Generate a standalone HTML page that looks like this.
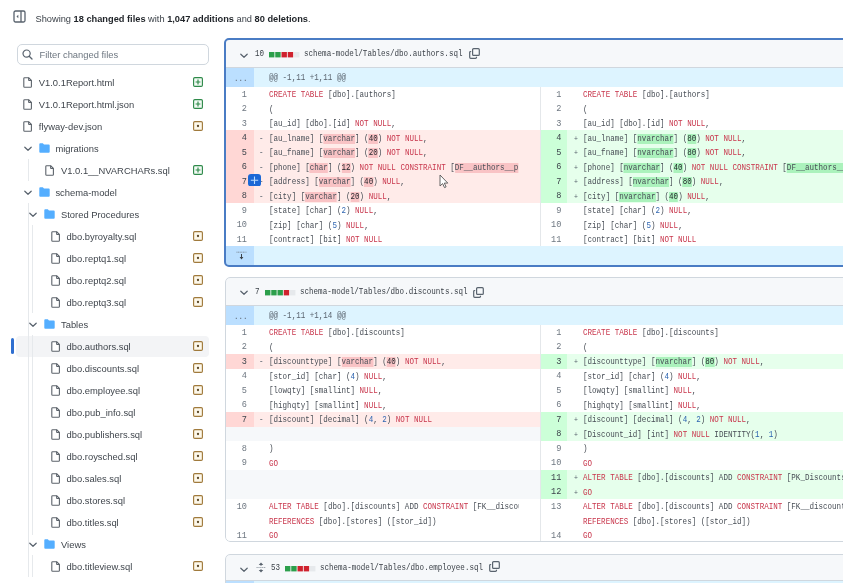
<!DOCTYPE html><html><head><meta charset="utf-8"><style>
*{box-sizing:border-box;margin:0;padding:0}
html,body{width:843px;height:583px;overflow:hidden;background:#fff}
body{position:relative;font-family:"Liberation Sans", sans-serif;color:#1f2328;filter:blur(0.35px)}
.abs{position:absolute}
.t{position:absolute;white-space:nowrap;font-size:9.4px;line-height:12px;color:#1f2328}
.num{position:absolute;font-family:"Liberation Mono", monospace;font-size:8.6px;line-height:14.5px;height:14.5px;color:#59636e;text-align:right;white-space:nowrap}
.code{position:absolute;white-space:nowrap;font-family:"Liberation Mono", monospace;font-size:8.6px;line-height:14.5px;height:14.5px;color:#474d55;transform-origin:0 50%;transform:scaleX(0.878)}
.k{color:#c8354b}
.n{color:#2d64b0}
.hd{background:#f9c3c5} .hd .n,.ha .n{color:#1f2328}
.ha{background:#abf2bc}
.bx{position:absolute;left:225px;width:680px;overflow:hidden;background:#fff;border-radius:5px}
</style></head><body><svg class="abs" style="left:13px;top:10px" width="13" height="13" viewBox="0 0 13 13">
<rect x="1" y="1" width="11" height="11" rx="1.5" fill="none" stroke="#59636e" stroke-width="1.3"/>
<line x1="8" y1="1" x2="8" y2="12" stroke="#59636e" stroke-width="1.3"/>
<path d="M5.3 4.7 L3.5 6.5 L5.3 8.3 Z" fill="#59636e"/></svg>
<div class="t" style="left:35.5px;top:12.8px;font-size:9.25px;color:#3b4148">Showing <b style="color:#1f2328">18 changed files</b> with <b style="color:#1f2328">1,047 additions</b> and <b style="color:#1f2328">80 deletions</b>.</div>
<div class="abs" style="left:17px;top:44px;width:192px;height:21px;border:1px solid #d0d7de;border-radius:5px;background:#fff"></div>
<svg class="abs" style="left:22px;top:49px" width="11" height="11" viewBox="0 0 11 11">
<circle cx="4.6" cy="4.6" r="3.6" fill="none" stroke="#59636e" stroke-width="1.2"/>
<line x1="7.2" y1="7.2" x2="10" y2="10" stroke="#59636e" stroke-width="1.3" stroke-linecap="round"/></svg>
<div class="t" style="left:39.5px;top:49px;color:#6e7781">Filter changed files</div>
<div class="abs" style="left:16px;top:335.5px;width:193px;height:21px;background:#f3f4f6;border-radius:4px"></div>
<div class="abs" style="left:11px;top:338px;width:2.6px;height:16px;background:#2f6fd0;border-radius:2px"></div>
<div class="abs" style="left:27.5px;top:159px;width:1px;height:22px;background:#e6e9ec"></div>
<div class="abs" style="left:27.5px;top:203px;width:1px;height:374px;background:#e6e9ec"></div>
<div class="abs" style="left:32.3px;top:225px;width:1px;height:88px;background:#e6e9ec"></div>
<div class="abs" style="left:32.3px;top:335px;width:1px;height:200px;background:#e6e9ec"></div>
<div class="abs" style="left:32.3px;top:555px;width:1px;height:22px;background:#e6e9ec"></div>
<svg class="abs" style="left:23.2px;top:77.0px" width="10" height="11" viewBox="0 0 10 11"><path d="M0.8 1.5 Q0.8 0.7 1.6 0.7 H5.6 L8.4 3.5 V9.5 Q8.4 10.3 7.6 10.3 H1.6 Q0.8 10.3 0.8 9.5 Z" fill="#fff" stroke="#5c636b" stroke-width="1.1" stroke-linejoin="round"/><path d="M5.6 0.7 V3.5 H8.4" fill="none" stroke="#5c636b" stroke-width="1"/></svg>
<div class="t" style="left:38.8px;top:76.9px;color:#40464d">V1.0.1Report.html</div>
<svg class="abs" style="left:193px;top:76.7px" width="10" height="10" viewBox="0 0 10 10"><rect x="0.6" y="0.6" width="8.8" height="8.8" rx="1.2" fill="#f2faf4" stroke="#2f8a4a" stroke-width="1.15"/><path d="M5 2.6 V7.4 M2.6 5 H7.4" stroke="#2f8a4a" stroke-width="1.15"/></svg>
<svg class="abs" style="left:23.2px;top:99.0px" width="10" height="11" viewBox="0 0 10 11"><path d="M0.8 1.5 Q0.8 0.7 1.6 0.7 H5.6 L8.4 3.5 V9.5 Q8.4 10.3 7.6 10.3 H1.6 Q0.8 10.3 0.8 9.5 Z" fill="#fff" stroke="#5c636b" stroke-width="1.1" stroke-linejoin="round"/><path d="M5.6 0.7 V3.5 H8.4" fill="none" stroke="#5c636b" stroke-width="1"/></svg>
<div class="t" style="left:38.8px;top:98.9px;color:#40464d">V1.0.1Report.html.json</div>
<svg class="abs" style="left:193px;top:98.7px" width="10" height="10" viewBox="0 0 10 10"><rect x="0.6" y="0.6" width="8.8" height="8.8" rx="1.2" fill="#f2faf4" stroke="#2f8a4a" stroke-width="1.15"/><path d="M5 2.6 V7.4 M2.6 5 H7.4" stroke="#2f8a4a" stroke-width="1.15"/></svg>
<svg class="abs" style="left:23.2px;top:121.0px" width="10" height="11" viewBox="0 0 10 11"><path d="M0.8 1.5 Q0.8 0.7 1.6 0.7 H5.6 L8.4 3.5 V9.5 Q8.4 10.3 7.6 10.3 H1.6 Q0.8 10.3 0.8 9.5 Z" fill="#fff" stroke="#5c636b" stroke-width="1.1" stroke-linejoin="round"/><path d="M5.6 0.7 V3.5 H8.4" fill="none" stroke="#5c636b" stroke-width="1"/></svg>
<div class="t" style="left:38.8px;top:120.9px;color:#40464d">flyway-dev.json</div>
<svg class="abs" style="left:193px;top:120.7px" width="10" height="10" viewBox="0 0 10 10"><rect x="0.6" y="0.6" width="8.8" height="8.8" rx="1.2" fill="#fdf8ea" stroke="#a07a3c" stroke-width="1.15"/><circle cx="5" cy="5" r="1.15" fill="#5e4a2a"/></svg>
<svg class="abs" style="left:23.6px;top:145.7px" width="8" height="6" viewBox="0 0 8 6"><path d="M0.8 1.2 L4 4.3 L7.2 1.2" fill="none" stroke="#59636e" stroke-width="1.2" stroke-linecap="round" stroke-linejoin="round"/></svg>
<svg class="abs" style="left:38.6px;top:143.0px" width="11" height="10" viewBox="0 0 11 10"><path d="M0.3 1.2 Q0.3 0.3 1.2 0.3 H3.8 L5 1.6 H9.8 Q10.7 1.6 10.7 2.5 V8.8 Q10.7 9.7 9.8 9.7 H1.2 Q0.3 9.7 0.3 8.8 Z" fill="#54aeff"/></svg>
<div class="t" style="left:55.4px;top:142.9px;color:#40464d">migrations</div>
<svg class="abs" style="left:45.4px;top:165.0px" width="10" height="11" viewBox="0 0 10 11"><path d="M0.8 1.5 Q0.8 0.7 1.6 0.7 H5.6 L8.4 3.5 V9.5 Q8.4 10.3 7.6 10.3 H1.6 Q0.8 10.3 0.8 9.5 Z" fill="#fff" stroke="#5c636b" stroke-width="1.1" stroke-linejoin="round"/><path d="M5.6 0.7 V3.5 H8.4" fill="none" stroke="#5c636b" stroke-width="1"/></svg>
<div class="t" style="left:61.0px;top:164.9px;color:#40464d">V1.0.1__NVARCHARs.sql</div>
<svg class="abs" style="left:193px;top:164.7px" width="10" height="10" viewBox="0 0 10 10"><rect x="0.6" y="0.6" width="8.8" height="8.8" rx="1.2" fill="#f2faf4" stroke="#2f8a4a" stroke-width="1.15"/><path d="M5 2.6 V7.4 M2.6 5 H7.4" stroke="#2f8a4a" stroke-width="1.15"/></svg>
<svg class="abs" style="left:23.6px;top:189.7px" width="8" height="6" viewBox="0 0 8 6"><path d="M0.8 1.2 L4 4.3 L7.2 1.2" fill="none" stroke="#59636e" stroke-width="1.2" stroke-linecap="round" stroke-linejoin="round"/></svg>
<svg class="abs" style="left:38.6px;top:187.0px" width="11" height="10" viewBox="0 0 11 10"><path d="M0.3 1.2 Q0.3 0.3 1.2 0.3 H3.8 L5 1.6 H9.8 Q10.7 1.6 10.7 2.5 V8.8 Q10.7 9.7 9.8 9.7 H1.2 Q0.3 9.7 0.3 8.8 Z" fill="#54aeff"/></svg>
<div class="t" style="left:55.4px;top:186.9px;color:#40464d">schema-model</div>
<svg class="abs" style="left:29.200000000000003px;top:211.7px" width="8" height="6" viewBox="0 0 8 6"><path d="M0.8 1.2 L4 4.3 L7.2 1.2" fill="none" stroke="#59636e" stroke-width="1.2" stroke-linecap="round" stroke-linejoin="round"/></svg>
<svg class="abs" style="left:44.2px;top:209.0px" width="11" height="10" viewBox="0 0 11 10"><path d="M0.3 1.2 Q0.3 0.3 1.2 0.3 H3.8 L5 1.6 H9.8 Q10.7 1.6 10.7 2.5 V8.8 Q10.7 9.7 9.8 9.7 H1.2 Q0.3 9.7 0.3 8.8 Z" fill="#54aeff"/></svg>
<div class="t" style="left:61.0px;top:208.9px;color:#40464d">Stored Procedures</div>
<svg class="abs" style="left:51.0px;top:231.0px" width="10" height="11" viewBox="0 0 10 11"><path d="M0.8 1.5 Q0.8 0.7 1.6 0.7 H5.6 L8.4 3.5 V9.5 Q8.4 10.3 7.6 10.3 H1.6 Q0.8 10.3 0.8 9.5 Z" fill="#fff" stroke="#5c636b" stroke-width="1.1" stroke-linejoin="round"/><path d="M5.6 0.7 V3.5 H8.4" fill="none" stroke="#5c636b" stroke-width="1"/></svg>
<div class="t" style="left:66.6px;top:230.9px;color:#40464d">dbo.byroyalty.sql</div>
<svg class="abs" style="left:193px;top:230.7px" width="10" height="10" viewBox="0 0 10 10"><rect x="0.6" y="0.6" width="8.8" height="8.8" rx="1.2" fill="#fdf8ea" stroke="#a07a3c" stroke-width="1.15"/><circle cx="5" cy="5" r="1.15" fill="#5e4a2a"/></svg>
<svg class="abs" style="left:51.0px;top:253.0px" width="10" height="11" viewBox="0 0 10 11"><path d="M0.8 1.5 Q0.8 0.7 1.6 0.7 H5.6 L8.4 3.5 V9.5 Q8.4 10.3 7.6 10.3 H1.6 Q0.8 10.3 0.8 9.5 Z" fill="#fff" stroke="#5c636b" stroke-width="1.1" stroke-linejoin="round"/><path d="M5.6 0.7 V3.5 H8.4" fill="none" stroke="#5c636b" stroke-width="1"/></svg>
<div class="t" style="left:66.6px;top:252.9px;color:#40464d">dbo.reptq1.sql</div>
<svg class="abs" style="left:193px;top:252.7px" width="10" height="10" viewBox="0 0 10 10"><rect x="0.6" y="0.6" width="8.8" height="8.8" rx="1.2" fill="#fdf8ea" stroke="#a07a3c" stroke-width="1.15"/><circle cx="5" cy="5" r="1.15" fill="#5e4a2a"/></svg>
<svg class="abs" style="left:51.0px;top:275.0px" width="10" height="11" viewBox="0 0 10 11"><path d="M0.8 1.5 Q0.8 0.7 1.6 0.7 H5.6 L8.4 3.5 V9.5 Q8.4 10.3 7.6 10.3 H1.6 Q0.8 10.3 0.8 9.5 Z" fill="#fff" stroke="#5c636b" stroke-width="1.1" stroke-linejoin="round"/><path d="M5.6 0.7 V3.5 H8.4" fill="none" stroke="#5c636b" stroke-width="1"/></svg>
<div class="t" style="left:66.6px;top:274.9px;color:#40464d">dbo.reptq2.sql</div>
<svg class="abs" style="left:193px;top:274.7px" width="10" height="10" viewBox="0 0 10 10"><rect x="0.6" y="0.6" width="8.8" height="8.8" rx="1.2" fill="#fdf8ea" stroke="#a07a3c" stroke-width="1.15"/><circle cx="5" cy="5" r="1.15" fill="#5e4a2a"/></svg>
<svg class="abs" style="left:51.0px;top:297.0px" width="10" height="11" viewBox="0 0 10 11"><path d="M0.8 1.5 Q0.8 0.7 1.6 0.7 H5.6 L8.4 3.5 V9.5 Q8.4 10.3 7.6 10.3 H1.6 Q0.8 10.3 0.8 9.5 Z" fill="#fff" stroke="#5c636b" stroke-width="1.1" stroke-linejoin="round"/><path d="M5.6 0.7 V3.5 H8.4" fill="none" stroke="#5c636b" stroke-width="1"/></svg>
<div class="t" style="left:66.6px;top:296.9px;color:#40464d">dbo.reptq3.sql</div>
<svg class="abs" style="left:193px;top:296.7px" width="10" height="10" viewBox="0 0 10 10"><rect x="0.6" y="0.6" width="8.8" height="8.8" rx="1.2" fill="#fdf8ea" stroke="#a07a3c" stroke-width="1.15"/><circle cx="5" cy="5" r="1.15" fill="#5e4a2a"/></svg>
<svg class="abs" style="left:29.200000000000003px;top:321.7px" width="8" height="6" viewBox="0 0 8 6"><path d="M0.8 1.2 L4 4.3 L7.2 1.2" fill="none" stroke="#59636e" stroke-width="1.2" stroke-linecap="round" stroke-linejoin="round"/></svg>
<svg class="abs" style="left:44.2px;top:319.0px" width="11" height="10" viewBox="0 0 11 10"><path d="M0.3 1.2 Q0.3 0.3 1.2 0.3 H3.8 L5 1.6 H9.8 Q10.7 1.6 10.7 2.5 V8.8 Q10.7 9.7 9.8 9.7 H1.2 Q0.3 9.7 0.3 8.8 Z" fill="#54aeff"/></svg>
<div class="t" style="left:61.0px;top:318.9px;color:#40464d">Tables</div>
<svg class="abs" style="left:51.0px;top:341.0px" width="10" height="11" viewBox="0 0 10 11"><path d="M0.8 1.5 Q0.8 0.7 1.6 0.7 H5.6 L8.4 3.5 V9.5 Q8.4 10.3 7.6 10.3 H1.6 Q0.8 10.3 0.8 9.5 Z" fill="#fff" stroke="#5c636b" stroke-width="1.1" stroke-linejoin="round"/><path d="M5.6 0.7 V3.5 H8.4" fill="none" stroke="#5c636b" stroke-width="1"/></svg>
<div class="t" style="left:66.6px;top:340.9px;color:#40464d">dbo.authors.sql</div>
<svg class="abs" style="left:193px;top:340.7px" width="10" height="10" viewBox="0 0 10 10"><rect x="0.6" y="0.6" width="8.8" height="8.8" rx="1.2" fill="#fdf8ea" stroke="#a07a3c" stroke-width="1.15"/><circle cx="5" cy="5" r="1.15" fill="#5e4a2a"/></svg>
<svg class="abs" style="left:51.0px;top:363.0px" width="10" height="11" viewBox="0 0 10 11"><path d="M0.8 1.5 Q0.8 0.7 1.6 0.7 H5.6 L8.4 3.5 V9.5 Q8.4 10.3 7.6 10.3 H1.6 Q0.8 10.3 0.8 9.5 Z" fill="#fff" stroke="#5c636b" stroke-width="1.1" stroke-linejoin="round"/><path d="M5.6 0.7 V3.5 H8.4" fill="none" stroke="#5c636b" stroke-width="1"/></svg>
<div class="t" style="left:66.6px;top:362.9px;color:#40464d">dbo.discounts.sql</div>
<svg class="abs" style="left:193px;top:362.7px" width="10" height="10" viewBox="0 0 10 10"><rect x="0.6" y="0.6" width="8.8" height="8.8" rx="1.2" fill="#fdf8ea" stroke="#a07a3c" stroke-width="1.15"/><circle cx="5" cy="5" r="1.15" fill="#5e4a2a"/></svg>
<svg class="abs" style="left:51.0px;top:385.0px" width="10" height="11" viewBox="0 0 10 11"><path d="M0.8 1.5 Q0.8 0.7 1.6 0.7 H5.6 L8.4 3.5 V9.5 Q8.4 10.3 7.6 10.3 H1.6 Q0.8 10.3 0.8 9.5 Z" fill="#fff" stroke="#5c636b" stroke-width="1.1" stroke-linejoin="round"/><path d="M5.6 0.7 V3.5 H8.4" fill="none" stroke="#5c636b" stroke-width="1"/></svg>
<div class="t" style="left:66.6px;top:384.9px;color:#40464d">dbo.employee.sql</div>
<svg class="abs" style="left:193px;top:384.7px" width="10" height="10" viewBox="0 0 10 10"><rect x="0.6" y="0.6" width="8.8" height="8.8" rx="1.2" fill="#fdf8ea" stroke="#a07a3c" stroke-width="1.15"/><circle cx="5" cy="5" r="1.15" fill="#5e4a2a"/></svg>
<svg class="abs" style="left:51.0px;top:407.0px" width="10" height="11" viewBox="0 0 10 11"><path d="M0.8 1.5 Q0.8 0.7 1.6 0.7 H5.6 L8.4 3.5 V9.5 Q8.4 10.3 7.6 10.3 H1.6 Q0.8 10.3 0.8 9.5 Z" fill="#fff" stroke="#5c636b" stroke-width="1.1" stroke-linejoin="round"/><path d="M5.6 0.7 V3.5 H8.4" fill="none" stroke="#5c636b" stroke-width="1"/></svg>
<div class="t" style="left:66.6px;top:406.9px;color:#40464d">dbo.pub_info.sql</div>
<svg class="abs" style="left:193px;top:406.7px" width="10" height="10" viewBox="0 0 10 10"><rect x="0.6" y="0.6" width="8.8" height="8.8" rx="1.2" fill="#fdf8ea" stroke="#a07a3c" stroke-width="1.15"/><circle cx="5" cy="5" r="1.15" fill="#5e4a2a"/></svg>
<svg class="abs" style="left:51.0px;top:429.0px" width="10" height="11" viewBox="0 0 10 11"><path d="M0.8 1.5 Q0.8 0.7 1.6 0.7 H5.6 L8.4 3.5 V9.5 Q8.4 10.3 7.6 10.3 H1.6 Q0.8 10.3 0.8 9.5 Z" fill="#fff" stroke="#5c636b" stroke-width="1.1" stroke-linejoin="round"/><path d="M5.6 0.7 V3.5 H8.4" fill="none" stroke="#5c636b" stroke-width="1"/></svg>
<div class="t" style="left:66.6px;top:428.9px;color:#40464d">dbo.publishers.sql</div>
<svg class="abs" style="left:193px;top:428.7px" width="10" height="10" viewBox="0 0 10 10"><rect x="0.6" y="0.6" width="8.8" height="8.8" rx="1.2" fill="#fdf8ea" stroke="#a07a3c" stroke-width="1.15"/><circle cx="5" cy="5" r="1.15" fill="#5e4a2a"/></svg>
<svg class="abs" style="left:51.0px;top:451.0px" width="10" height="11" viewBox="0 0 10 11"><path d="M0.8 1.5 Q0.8 0.7 1.6 0.7 H5.6 L8.4 3.5 V9.5 Q8.4 10.3 7.6 10.3 H1.6 Q0.8 10.3 0.8 9.5 Z" fill="#fff" stroke="#5c636b" stroke-width="1.1" stroke-linejoin="round"/><path d="M5.6 0.7 V3.5 H8.4" fill="none" stroke="#5c636b" stroke-width="1"/></svg>
<div class="t" style="left:66.6px;top:450.9px;color:#40464d">dbo.roysched.sql</div>
<svg class="abs" style="left:193px;top:450.7px" width="10" height="10" viewBox="0 0 10 10"><rect x="0.6" y="0.6" width="8.8" height="8.8" rx="1.2" fill="#fdf8ea" stroke="#a07a3c" stroke-width="1.15"/><circle cx="5" cy="5" r="1.15" fill="#5e4a2a"/></svg>
<svg class="abs" style="left:51.0px;top:473.0px" width="10" height="11" viewBox="0 0 10 11"><path d="M0.8 1.5 Q0.8 0.7 1.6 0.7 H5.6 L8.4 3.5 V9.5 Q8.4 10.3 7.6 10.3 H1.6 Q0.8 10.3 0.8 9.5 Z" fill="#fff" stroke="#5c636b" stroke-width="1.1" stroke-linejoin="round"/><path d="M5.6 0.7 V3.5 H8.4" fill="none" stroke="#5c636b" stroke-width="1"/></svg>
<div class="t" style="left:66.6px;top:472.9px;color:#40464d">dbo.sales.sql</div>
<svg class="abs" style="left:193px;top:472.7px" width="10" height="10" viewBox="0 0 10 10"><rect x="0.6" y="0.6" width="8.8" height="8.8" rx="1.2" fill="#fdf8ea" stroke="#a07a3c" stroke-width="1.15"/><circle cx="5" cy="5" r="1.15" fill="#5e4a2a"/></svg>
<svg class="abs" style="left:51.0px;top:495.0px" width="10" height="11" viewBox="0 0 10 11"><path d="M0.8 1.5 Q0.8 0.7 1.6 0.7 H5.6 L8.4 3.5 V9.5 Q8.4 10.3 7.6 10.3 H1.6 Q0.8 10.3 0.8 9.5 Z" fill="#fff" stroke="#5c636b" stroke-width="1.1" stroke-linejoin="round"/><path d="M5.6 0.7 V3.5 H8.4" fill="none" stroke="#5c636b" stroke-width="1"/></svg>
<div class="t" style="left:66.6px;top:494.9px;color:#40464d">dbo.stores.sql</div>
<svg class="abs" style="left:193px;top:494.7px" width="10" height="10" viewBox="0 0 10 10"><rect x="0.6" y="0.6" width="8.8" height="8.8" rx="1.2" fill="#fdf8ea" stroke="#a07a3c" stroke-width="1.15"/><circle cx="5" cy="5" r="1.15" fill="#5e4a2a"/></svg>
<svg class="abs" style="left:51.0px;top:517.0px" width="10" height="11" viewBox="0 0 10 11"><path d="M0.8 1.5 Q0.8 0.7 1.6 0.7 H5.6 L8.4 3.5 V9.5 Q8.4 10.3 7.6 10.3 H1.6 Q0.8 10.3 0.8 9.5 Z" fill="#fff" stroke="#5c636b" stroke-width="1.1" stroke-linejoin="round"/><path d="M5.6 0.7 V3.5 H8.4" fill="none" stroke="#5c636b" stroke-width="1"/></svg>
<div class="t" style="left:66.6px;top:516.9px;color:#40464d">dbo.titles.sql</div>
<svg class="abs" style="left:193px;top:516.7px" width="10" height="10" viewBox="0 0 10 10"><rect x="0.6" y="0.6" width="8.8" height="8.8" rx="1.2" fill="#fdf8ea" stroke="#a07a3c" stroke-width="1.15"/><circle cx="5" cy="5" r="1.15" fill="#5e4a2a"/></svg>
<svg class="abs" style="left:29.200000000000003px;top:541.7px" width="8" height="6" viewBox="0 0 8 6"><path d="M0.8 1.2 L4 4.3 L7.2 1.2" fill="none" stroke="#59636e" stroke-width="1.2" stroke-linecap="round" stroke-linejoin="round"/></svg>
<svg class="abs" style="left:44.2px;top:539.0px" width="11" height="10" viewBox="0 0 11 10"><path d="M0.3 1.2 Q0.3 0.3 1.2 0.3 H3.8 L5 1.6 H9.8 Q10.7 1.6 10.7 2.5 V8.8 Q10.7 9.7 9.8 9.7 H1.2 Q0.3 9.7 0.3 8.8 Z" fill="#54aeff"/></svg>
<div class="t" style="left:61.0px;top:538.9px;color:#40464d">Views</div>
<svg class="abs" style="left:51.0px;top:561.0px" width="10" height="11" viewBox="0 0 10 11"><path d="M0.8 1.5 Q0.8 0.7 1.6 0.7 H5.6 L8.4 3.5 V9.5 Q8.4 10.3 7.6 10.3 H1.6 Q0.8 10.3 0.8 9.5 Z" fill="#fff" stroke="#5c636b" stroke-width="1.1" stroke-linejoin="round"/><path d="M5.6 0.7 V3.5 H8.4" fill="none" stroke="#5c636b" stroke-width="1"/></svg>
<div class="t" style="left:66.6px;top:560.9px;color:#40464d">dbo.titleview.sql</div>
<svg class="abs" style="left:193px;top:560.7px" width="10" height="10" viewBox="0 0 10 10"><rect x="0.6" y="0.6" width="8.8" height="8.8" rx="1.2" fill="#fdf8ea" stroke="#a07a3c" stroke-width="1.15"/><circle cx="5" cy="5" r="1.15" fill="#5e4a2a"/></svg>
<div class="bx" style="top:38px;height:228.5px"><div class="abs" style="left:0;top:0;width:680px;height:29.6px;background:#f6f8fa;border-bottom:1px solid #d0d7de"></div><svg class="abs" style="left:15px;top:14.5px" width="8" height="6" viewBox="0 0 8 6"><path d="M0.8 1.2 L4 4.3 L7.2 1.2" fill="none" stroke="#59636e" stroke-width="1.2" stroke-linecap="round" stroke-linejoin="round"/></svg><div class="code" style="left:29.5px;top:9.25px;color:#3b4148">10</div><svg class="abs" style="left:44px;top:13.9px" width="32" height="6" viewBox="0 0 32 6"><rect x="0.00" y="0" width="5.4" height="5.4" fill="#2c9f4b"/><rect x="6.25" y="0" width="5.4" height="5.4" fill="#2c9f4b"/><rect x="12.50" y="0" width="5.4" height="5.4" fill="#cf222e"/><rect x="18.75" y="0" width="5.4" height="5.4" fill="#cf222e"/><rect x="25.00" y="0" width="5.4" height="5.4" fill="#e6e9ec"/></svg><div class="code" style="left:78.5px;top:9.25px;color:#3b4148">schema-model/Tables/dbo.authors.sql</div><svg class="abs" style="left:243.5px;top:9.7px" width="11" height="11" viewBox="0 0 11 11"><rect x="3.6" y="0.7" width="6.7" height="6.7" rx="1" fill="none" stroke="#59636e" stroke-width="1.2"/><path d="M2.2 3.5 H1.7 Q0.7 3.5 0.7 4.5 V9.3 Q0.7 10.3 1.7 10.3 H6.5 Q7.5 10.3 7.5 9.3 V8.8" fill="none" stroke="#59636e" stroke-width="1.2"/></svg><div class="abs" style="left:0;top:29.6px;width:29px;height:19.3px;background:#bbdfff"></div><div class="abs" style="left:29px;top:29.6px;width:651px;height:19.3px;background:#ddf4ff"></div><div class="code" style="left:9.3px;top:33.8px;color:#59636e">...</div><div class="code" style="left:43.5px;top:32.8px;color:#59636e">@@ -1,11 +1,11 @@</div><div class="abs" style="left:29px;top:48.9px;width:286px;height:14.5px;background:#fff;overflow:hidden"><div class="abs" style="left:0;top:0;width:264.6px;height:100%;overflow:hidden"><div class="code" style="left:14.5px;top:1.3px"><span class="k">CREATE</span> <span class="k">TABLE</span> [dbo].[authors]</div></div></div><div class="num" style="left:0px;top:49.5px;width:22px;color:#6e7781">1</div><div class="abs" style="left:342px;top:48.9px;width:338px;height:14.5px;background:#fff;overflow:hidden"><div class="code" style="left:16.0px;top:1.3px"><span class="k">CREATE</span> <span class="k">TABLE</span> [dbo].[authors]</div></div><div class="num" style="left:315px;top:49.5px;width:21.4px;color:#6e7781">1</div><div class="abs" style="left:315px;top:48.9px;width:1px;height:14.5px;background:#e4e7ea"></div><div class="abs" style="left:29px;top:63.4px;width:286px;height:14.5px;background:#fff;overflow:hidden"><div class="abs" style="left:0;top:0;width:264.6px;height:100%;overflow:hidden"><div class="code" style="left:14.5px;top:1.3px">(</div></div></div><div class="num" style="left:0px;top:64.0px;width:22px;color:#6e7781">2</div><div class="abs" style="left:342px;top:63.4px;width:338px;height:14.5px;background:#fff;overflow:hidden"><div class="code" style="left:16.0px;top:1.3px">(</div></div><div class="num" style="left:315px;top:64.0px;width:21.4px;color:#6e7781">2</div><div class="abs" style="left:315px;top:63.4px;width:1px;height:14.5px;background:#e4e7ea"></div><div class="abs" style="left:29px;top:77.9px;width:286px;height:14.5px;background:#fff;overflow:hidden"><div class="abs" style="left:0;top:0;width:264.6px;height:100%;overflow:hidden"><div class="code" style="left:14.5px;top:1.3px">[au_id] [dbo].[id] <span class="k">NOT</span> <span class="k">NULL</span>,</div></div></div><div class="num" style="left:0px;top:78.5px;width:22px;color:#6e7781">3</div><div class="abs" style="left:342px;top:77.9px;width:338px;height:14.5px;background:#fff;overflow:hidden"><div class="code" style="left:16.0px;top:1.3px">[au_id] [dbo].[id] <span class="k">NOT</span> <span class="k">NULL</span>,</div></div><div class="num" style="left:315px;top:78.5px;width:21.4px;color:#6e7781">3</div><div class="abs" style="left:315px;top:77.9px;width:1px;height:14.5px;background:#e4e7ea"></div><div class="abs" style="left:0px;top:92.4px;width:29px;height:14.5px;background:#ffd7d5"></div><div class="abs" style="left:29px;top:92.4px;width:286px;height:14.5px;background:#ffebe9;overflow:hidden"><div class="code" style="left:5.0px;top:1.3px;color:#59636e;font-size:8.6px">-</div><div class="abs" style="left:0;top:0;width:264.6px;height:100%;overflow:hidden"><div class="code" style="left:14.5px;top:1.3px">[au_lname] [<span class="hd">varchar</span>] (<span class="hd"><span class="n">40</span></span>) <span class="k">NOT</span> <span class="k">NULL</span>,</div></div></div><div class="num" style="left:0px;top:93.0px;width:22px;color:#3d444c">4</div><div class="abs" style="left:315px;top:92.4px;width:27px;height:14.5px;background:#ccffd8"></div><div class="abs" style="left:342px;top:92.4px;width:338px;height:14.5px;background:#e6ffec;overflow:hidden"><div class="code" style="left:6.6px;top:1.3px;color:#59636e;font-size:7.5px">+</div><div class="code" style="left:16.0px;top:1.3px">[au_lname] [<span class="ha">nvarchar</span>] (<span class="ha"><span class="n">80</span></span>) <span class="k">NOT</span> <span class="k">NULL</span>,</div></div><div class="num" style="left:315px;top:93.0px;width:21.4px;color:#3d444c">4</div><div class="abs" style="left:315px;top:92.4px;width:1px;height:14.5px;background:#e4e7ea"></div><div class="abs" style="left:0px;top:106.9px;width:29px;height:14.5px;background:#ffd7d5"></div><div class="abs" style="left:29px;top:106.9px;width:286px;height:14.5px;background:#ffebe9;overflow:hidden"><div class="code" style="left:5.0px;top:1.3px;color:#59636e;font-size:8.6px">-</div><div class="abs" style="left:0;top:0;width:264.6px;height:100%;overflow:hidden"><div class="code" style="left:14.5px;top:1.3px">[au_fname] [<span class="hd">varchar</span>] (<span class="hd"><span class="n">20</span></span>) <span class="k">NOT</span> <span class="k">NULL</span>,</div></div></div><div class="num" style="left:0px;top:107.5px;width:22px;color:#3d444c">5</div><div class="abs" style="left:315px;top:106.9px;width:27px;height:14.5px;background:#ccffd8"></div><div class="abs" style="left:342px;top:106.9px;width:338px;height:14.5px;background:#e6ffec;overflow:hidden"><div class="code" style="left:6.6px;top:1.3px;color:#59636e;font-size:7.5px">+</div><div class="code" style="left:16.0px;top:1.3px">[au_fname] [<span class="ha">nvarchar</span>] (<span class="ha"><span class="n">80</span></span>) <span class="k">NOT</span> <span class="k">NULL</span>,</div></div><div class="num" style="left:315px;top:107.5px;width:21.4px;color:#3d444c">5</div><div class="abs" style="left:315px;top:106.9px;width:1px;height:14.5px;background:#e4e7ea"></div><div class="abs" style="left:0px;top:121.4px;width:29px;height:14.5px;background:#ffd7d5"></div><div class="abs" style="left:29px;top:121.4px;width:286px;height:14.5px;background:#ffebe9;overflow:hidden"><div class="code" style="left:5.0px;top:1.3px;color:#59636e;font-size:8.6px">-</div><div class="abs" style="left:0;top:0;width:264.6px;height:100%;overflow:hidden"><div class="code" style="left:14.5px;top:1.3px">[phone] [<span class="hd">char</span>] (<span class="hd"><span class="n">12</span></span>) <span class="k">NOT</span> <span class="k">NULL</span> <span class="k">CONSTRAINT</span> [<span class="hd">DF__authors__p</span></div></div></div><div class="num" style="left:0px;top:122.0px;width:22px;color:#3d444c">6</div><div class="abs" style="left:315px;top:121.4px;width:27px;height:14.5px;background:#ccffd8"></div><div class="abs" style="left:342px;top:121.4px;width:338px;height:14.5px;background:#e6ffec;overflow:hidden"><div class="code" style="left:6.6px;top:1.3px;color:#59636e;font-size:7.5px">+</div><div class="code" style="left:16.0px;top:1.3px">[phone] [<span class="ha">nvarchar</span>] (<span class="ha"><span class="n">40</span></span>) <span class="k">NOT</span> <span class="k">NULL</span> <span class="k">CONSTRAINT</span> [<span class="ha">DF__authors__phone</span>]</div></div><div class="num" style="left:315px;top:122.0px;width:21.4px;color:#3d444c">6</div><div class="abs" style="left:315px;top:121.4px;width:1px;height:14.5px;background:#e4e7ea"></div><div class="abs" style="left:0px;top:135.9px;width:29px;height:14.5px;background:#ffd7d5"></div><div class="abs" style="left:29px;top:135.9px;width:286px;height:14.5px;background:#ffebe9;overflow:hidden"><div class="code" style="left:5.0px;top:1.3px;color:#59636e;font-size:8.6px">-</div><div class="abs" style="left:0;top:0;width:264.6px;height:100%;overflow:hidden"><div class="code" style="left:14.5px;top:1.3px">[address] [<span class="hd">varchar</span>] (<span class="hd"><span class="n">40</span></span>) <span class="k">NULL</span>,</div></div></div><div class="num" style="left:0px;top:136.5px;width:22px;color:#3d444c">7</div><div class="abs" style="left:315px;top:135.9px;width:27px;height:14.5px;background:#ccffd8"></div><div class="abs" style="left:342px;top:135.9px;width:338px;height:14.5px;background:#e6ffec;overflow:hidden"><div class="code" style="left:6.6px;top:1.3px;color:#59636e;font-size:7.5px">+</div><div class="code" style="left:16.0px;top:1.3px">[address] [<span class="ha">nvarchar</span>] (<span class="ha"><span class="n">80</span></span>) <span class="k">NULL</span>,</div></div><div class="num" style="left:315px;top:136.5px;width:21.4px;color:#3d444c">7</div><div class="abs" style="left:315px;top:135.9px;width:1px;height:14.5px;background:#e4e7ea"></div><div class="abs" style="left:0px;top:150.4px;width:29px;height:14.5px;background:#ffd7d5"></div><div class="abs" style="left:29px;top:150.4px;width:286px;height:14.5px;background:#ffebe9;overflow:hidden"><div class="code" style="left:5.0px;top:1.3px;color:#59636e;font-size:8.6px">-</div><div class="abs" style="left:0;top:0;width:264.6px;height:100%;overflow:hidden"><div class="code" style="left:14.5px;top:1.3px">[city] [<span class="hd">varchar</span>] (<span class="hd"><span class="n">20</span></span>) <span class="k">NULL</span>,</div></div></div><div class="num" style="left:0px;top:151.0px;width:22px;color:#3d444c">8</div><div class="abs" style="left:315px;top:150.4px;width:27px;height:14.5px;background:#ccffd8"></div><div class="abs" style="left:342px;top:150.4px;width:338px;height:14.5px;background:#e6ffec;overflow:hidden"><div class="code" style="left:6.6px;top:1.3px;color:#59636e;font-size:7.5px">+</div><div class="code" style="left:16.0px;top:1.3px">[city] [<span class="ha">nvarchar</span>] (<span class="ha"><span class="n">40</span></span>) <span class="k">NULL</span>,</div></div><div class="num" style="left:315px;top:151.0px;width:21.4px;color:#3d444c">8</div><div class="abs" style="left:315px;top:150.4px;width:1px;height:14.5px;background:#e4e7ea"></div><div class="abs" style="left:29px;top:164.9px;width:286px;height:14.5px;background:#fff;overflow:hidden"><div class="abs" style="left:0;top:0;width:264.6px;height:100%;overflow:hidden"><div class="code" style="left:14.5px;top:1.3px">[state] [char] (<span class="n">2</span>) <span class="k">NULL</span>,</div></div></div><div class="num" style="left:0px;top:165.5px;width:22px;color:#6e7781">9</div><div class="abs" style="left:342px;top:164.9px;width:338px;height:14.5px;background:#fff;overflow:hidden"><div class="code" style="left:16.0px;top:1.3px">[state] [char] (<span class="n">2</span>) <span class="k">NULL</span>,</div></div><div class="num" style="left:315px;top:165.5px;width:21.4px;color:#6e7781">9</div><div class="abs" style="left:315px;top:164.9px;width:1px;height:14.5px;background:#e4e7ea"></div><div class="abs" style="left:29px;top:179.4px;width:286px;height:14.5px;background:#fff;overflow:hidden"><div class="abs" style="left:0;top:0;width:264.6px;height:100%;overflow:hidden"><div class="code" style="left:14.5px;top:1.3px">[zip] [char] (<span class="n">5</span>) <span class="k">NULL</span>,</div></div></div><div class="num" style="left:0px;top:180.0px;width:22px;color:#6e7781">10</div><div class="abs" style="left:342px;top:179.4px;width:338px;height:14.5px;background:#fff;overflow:hidden"><div class="code" style="left:16.0px;top:1.3px">[zip] [char] (<span class="n">5</span>) <span class="k">NULL</span>,</div></div><div class="num" style="left:315px;top:180.0px;width:21.4px;color:#6e7781">10</div><div class="abs" style="left:315px;top:179.4px;width:1px;height:14.5px;background:#e4e7ea"></div><div class="abs" style="left:29px;top:193.9px;width:286px;height:14.5px;background:#fff;overflow:hidden"><div class="abs" style="left:0;top:0;width:264.6px;height:100%;overflow:hidden"><div class="code" style="left:14.5px;top:1.3px">[contract] [bit] <span class="k">NOT</span> <span class="k">NULL</span></div></div></div><div class="num" style="left:0px;top:194.5px;width:22px;color:#6e7781">11</div><div class="abs" style="left:342px;top:193.9px;width:338px;height:14.5px;background:#fff;overflow:hidden"><div class="code" style="left:16.0px;top:1.3px">[contract] [bit] <span class="k">NOT</span> <span class="k">NULL</span></div></div><div class="num" style="left:315px;top:194.5px;width:21.4px;color:#6e7781">11</div><div class="abs" style="left:315px;top:193.9px;width:1px;height:14.5px;background:#e4e7ea"></div><div class="abs" style="left:0;top:208.4px;width:29px;height:20.099999999999994px;background:#bbdfff"></div><div class="abs" style="left:29px;top:208.4px;width:651px;height:20.099999999999994px;background:#ddf4ff"></div><svg class="abs" style="left:10.5px;top:213.4px" width="12" height="10" viewBox="0 0 12 10"><path d="M0.5 1.2 H10.5" stroke="#6e7781" stroke-width="0.8" stroke-dasharray="1 0.6"/><path d="M5.5 3 V7" fill="none" stroke="#3b4148" stroke-width="1"/><path d="M3.6 6 L5.5 8.6 L7.4 6 Z" fill="#3b4148"/></svg><svg class="abs" style="left:23px;top:135.5px" width="13" height="12.5" viewBox="0 0 13 12.5"><rect x="0" y="0" width="13" height="12.5" rx="3" fill="#1b68d6"/><path d="M6.5 2.6 V9.9 M2.8 6.25 H10.2" stroke="#b9dcff" stroke-width="1.1"/></svg></div>
<div class="abs" style="left:224px;top:38px;width:690px;height:228.5px;border:2px solid #4a7cc4;border-radius:5px"></div>
<svg class="abs" style="left:439.3px;top:174.2px" width="10" height="15" viewBox="0 0 10 15"><path d="M1 1 V12 L3.6 9.6 L5.5 13.6 L7.1 12.9 L5.3 9.1 H8.8 Z" fill="#fff" stroke="#555" stroke-width="0.9" stroke-linejoin="round"/></svg>
<div class="bx" style="top:277px;height:264.5px"><div class="abs" style="left:0;top:0;width:680px;height:29px;background:#f6f8fa;border-bottom:1px solid #d0d7de"></div><svg class="abs" style="left:15px;top:13.3px" width="8" height="6" viewBox="0 0 8 6"><path d="M0.8 1.2 L4 4.3 L7.2 1.2" fill="none" stroke="#59636e" stroke-width="1.2" stroke-linecap="round" stroke-linejoin="round"/></svg><div class="code" style="left:29.5px;top:8.05px;color:#3b4148">7</div><svg class="abs" style="left:40px;top:12.700000000000001px" width="32" height="6" viewBox="0 0 32 6"><rect x="0.00" y="0" width="5.4" height="5.4" fill="#2c9f4b"/><rect x="6.25" y="0" width="5.4" height="5.4" fill="#2c9f4b"/><rect x="12.50" y="0" width="5.4" height="5.4" fill="#2c9f4b"/><rect x="18.75" y="0" width="5.4" height="5.4" fill="#cf222e"/><rect x="25.00" y="0" width="5.4" height="5.4" fill="#e6e9ec"/></svg><div class="code" style="left:74.5px;top:8.05px;color:#3b4148">schema-model/Tables/dbo.discounts.sql</div><svg class="abs" style="left:248.3px;top:10.0px" width="11" height="11" viewBox="0 0 11 11"><rect x="3.6" y="0.7" width="6.7" height="6.7" rx="1" fill="none" stroke="#59636e" stroke-width="1.2"/><path d="M2.2 3.5 H1.7 Q0.7 3.5 0.7 4.5 V9.3 Q0.7 10.3 1.7 10.3 H6.5 Q7.5 10.3 7.5 9.3 V8.8" fill="none" stroke="#59636e" stroke-width="1.2"/></svg><div class="abs" style="left:0;top:29px;width:29px;height:19px;background:#bbdfff"></div><div class="abs" style="left:29px;top:29px;width:651px;height:19px;background:#ddf4ff"></div><div class="code" style="left:9.3px;top:33.05px;color:#59636e">...</div><div class="code" style="left:43.5px;top:32.05px;color:#59636e">@@ -1,11 +1,14 @@</div><div class="abs" style="left:29px;top:48.0px;width:286px;height:14.5px;background:#fff;overflow:hidden"><div class="abs" style="left:0;top:0;width:264.6px;height:100%;overflow:hidden"><div class="code" style="left:14.5px;top:1.3px"><span class="k">CREATE</span> <span class="k">TABLE</span> [dbo].[discounts]</div></div></div><div class="num" style="left:0px;top:48.6px;width:22px;color:#6e7781">1</div><div class="abs" style="left:342px;top:48.0px;width:338px;height:14.5px;background:#fff;overflow:hidden"><div class="code" style="left:16.0px;top:1.3px"><span class="k">CREATE</span> <span class="k">TABLE</span> [dbo].[discounts]</div></div><div class="num" style="left:315px;top:48.6px;width:21.4px;color:#6e7781">1</div><div class="abs" style="left:315px;top:48.0px;width:1px;height:14.5px;background:#e4e7ea"></div><div class="abs" style="left:29px;top:62.5px;width:286px;height:14.5px;background:#fff;overflow:hidden"><div class="abs" style="left:0;top:0;width:264.6px;height:100%;overflow:hidden"><div class="code" style="left:14.5px;top:1.3px">(</div></div></div><div class="num" style="left:0px;top:63.1px;width:22px;color:#6e7781">2</div><div class="abs" style="left:342px;top:62.5px;width:338px;height:14.5px;background:#fff;overflow:hidden"><div class="code" style="left:16.0px;top:1.3px">(</div></div><div class="num" style="left:315px;top:63.1px;width:21.4px;color:#6e7781">2</div><div class="abs" style="left:315px;top:62.5px;width:1px;height:14.5px;background:#e4e7ea"></div><div class="abs" style="left:0px;top:77.0px;width:29px;height:14.5px;background:#ffd7d5"></div><div class="abs" style="left:29px;top:77.0px;width:286px;height:14.5px;background:#ffebe9;overflow:hidden"><div class="code" style="left:5.0px;top:1.3px;color:#59636e;font-size:8.6px">-</div><div class="abs" style="left:0;top:0;width:264.6px;height:100%;overflow:hidden"><div class="code" style="left:14.5px;top:1.3px">[discounttype] [<span class="hd">varchar</span>] (<span class="hd"><span class="n">40</span></span>) <span class="k">NOT</span> <span class="k">NULL</span>,</div></div></div><div class="num" style="left:0px;top:77.6px;width:22px;color:#3d444c">3</div><div class="abs" style="left:315px;top:77.0px;width:27px;height:14.5px;background:#ccffd8"></div><div class="abs" style="left:342px;top:77.0px;width:338px;height:14.5px;background:#e6ffec;overflow:hidden"><div class="code" style="left:6.6px;top:1.3px;color:#59636e;font-size:7.5px">+</div><div class="code" style="left:16.0px;top:1.3px">[discounttype] [<span class="ha">nvarchar</span>] (<span class="ha"><span class="n">80</span></span>) <span class="k">NOT</span> <span class="k">NULL</span>,</div></div><div class="num" style="left:315px;top:77.6px;width:21.4px;color:#3d444c">3</div><div class="abs" style="left:315px;top:77.0px;width:1px;height:14.5px;background:#e4e7ea"></div><div class="abs" style="left:29px;top:91.5px;width:286px;height:14.5px;background:#fff;overflow:hidden"><div class="abs" style="left:0;top:0;width:264.6px;height:100%;overflow:hidden"><div class="code" style="left:14.5px;top:1.3px">[stor_id] [char] (<span class="n">4</span>) <span class="k">NULL</span>,</div></div></div><div class="num" style="left:0px;top:92.1px;width:22px;color:#6e7781">4</div><div class="abs" style="left:342px;top:91.5px;width:338px;height:14.5px;background:#fff;overflow:hidden"><div class="code" style="left:16.0px;top:1.3px">[stor_id] [char] (<span class="n">4</span>) <span class="k">NULL</span>,</div></div><div class="num" style="left:315px;top:92.1px;width:21.4px;color:#6e7781">4</div><div class="abs" style="left:315px;top:91.5px;width:1px;height:14.5px;background:#e4e7ea"></div><div class="abs" style="left:29px;top:106.0px;width:286px;height:14.5px;background:#fff;overflow:hidden"><div class="abs" style="left:0;top:0;width:264.6px;height:100%;overflow:hidden"><div class="code" style="left:14.5px;top:1.3px">[lowqty] [smallint] <span class="k">NULL</span>,</div></div></div><div class="num" style="left:0px;top:106.6px;width:22px;color:#6e7781">5</div><div class="abs" style="left:342px;top:106.0px;width:338px;height:14.5px;background:#fff;overflow:hidden"><div class="code" style="left:16.0px;top:1.3px">[lowqty] [smallint] <span class="k">NULL</span>,</div></div><div class="num" style="left:315px;top:106.6px;width:21.4px;color:#6e7781">5</div><div class="abs" style="left:315px;top:106.0px;width:1px;height:14.5px;background:#e4e7ea"></div><div class="abs" style="left:29px;top:120.5px;width:286px;height:14.5px;background:#fff;overflow:hidden"><div class="abs" style="left:0;top:0;width:264.6px;height:100%;overflow:hidden"><div class="code" style="left:14.5px;top:1.3px">[highqty] [smallint] <span class="k">NULL</span>,</div></div></div><div class="num" style="left:0px;top:121.1px;width:22px;color:#6e7781">6</div><div class="abs" style="left:342px;top:120.5px;width:338px;height:14.5px;background:#fff;overflow:hidden"><div class="code" style="left:16.0px;top:1.3px">[highqty] [smallint] <span class="k">NULL</span>,</div></div><div class="num" style="left:315px;top:121.1px;width:21.4px;color:#6e7781">6</div><div class="abs" style="left:315px;top:120.5px;width:1px;height:14.5px;background:#e4e7ea"></div><div class="abs" style="left:0px;top:135.0px;width:29px;height:14.5px;background:#ffd7d5"></div><div class="abs" style="left:29px;top:135.0px;width:286px;height:14.5px;background:#ffebe9;overflow:hidden"><div class="code" style="left:5.0px;top:1.3px;color:#59636e;font-size:8.6px">-</div><div class="abs" style="left:0;top:0;width:264.6px;height:100%;overflow:hidden"><div class="code" style="left:14.5px;top:1.3px">[discount] [decimal] (<span class="n">4</span>, <span class="n">2</span>) <span class="k">NOT</span> <span class="k">NULL</span></div></div></div><div class="num" style="left:0px;top:135.6px;width:22px;color:#3d444c">7</div><div class="abs" style="left:315px;top:135.0px;width:27px;height:14.5px;background:#ccffd8"></div><div class="abs" style="left:342px;top:135.0px;width:338px;height:14.5px;background:#e6ffec;overflow:hidden"><div class="code" style="left:6.6px;top:1.3px;color:#59636e;font-size:7.5px">+</div><div class="code" style="left:16.0px;top:1.3px">[discount] [decimal] (<span class="n">4</span>, <span class="n">2</span>) <span class="k">NOT</span> <span class="k">NULL</span>,</div></div><div class="num" style="left:315px;top:135.6px;width:21.4px;color:#3d444c">7</div><div class="abs" style="left:315px;top:135.0px;width:1px;height:14.5px;background:#e4e7ea"></div><div class="abs" style="left:0px;top:149.5px;width:29px;height:14.5px;background:#f6f8fa"></div><div class="abs" style="left:29px;top:149.5px;width:286px;height:14.5px;background:#f6f8fa;overflow:hidden"></div><div class="abs" style="left:315px;top:149.5px;width:27px;height:14.5px;background:#ccffd8"></div><div class="abs" style="left:342px;top:149.5px;width:338px;height:14.5px;background:#e6ffec;overflow:hidden"><div class="code" style="left:6.6px;top:1.3px;color:#59636e;font-size:7.5px">+</div><div class="code" style="left:16.0px;top:1.3px">[Discount_id] [int] <span class="k">NOT</span> <span class="k">NULL</span> IDENTITY(<span class="n">1</span>, <span class="n">1</span>)</div></div><div class="num" style="left:315px;top:150.1px;width:21.4px;color:#3d444c">8</div><div class="abs" style="left:315px;top:149.5px;width:1px;height:14.5px;background:#e4e7ea"></div><div class="abs" style="left:29px;top:164.0px;width:286px;height:14.5px;background:#fff;overflow:hidden"><div class="abs" style="left:0;top:0;width:264.6px;height:100%;overflow:hidden"><div class="code" style="left:14.5px;top:1.3px">)</div></div></div><div class="num" style="left:0px;top:164.6px;width:22px;color:#6e7781">8</div><div class="abs" style="left:342px;top:164.0px;width:338px;height:14.5px;background:#fff;overflow:hidden"><div class="code" style="left:16.0px;top:1.3px">)</div></div><div class="num" style="left:315px;top:164.6px;width:21.4px;color:#6e7781">9</div><div class="abs" style="left:315px;top:164.0px;width:1px;height:14.5px;background:#e4e7ea"></div><div class="abs" style="left:29px;top:178.5px;width:286px;height:14.5px;background:#fff;overflow:hidden"><div class="abs" style="left:0;top:0;width:264.6px;height:100%;overflow:hidden"><div class="code" style="left:14.5px;top:1.3px"><span class="k">GO</span></div></div></div><div class="num" style="left:0px;top:179.1px;width:22px;color:#6e7781">9</div><div class="abs" style="left:342px;top:178.5px;width:338px;height:14.5px;background:#fff;overflow:hidden"><div class="code" style="left:16.0px;top:1.3px"><span class="k">GO</span></div></div><div class="num" style="left:315px;top:179.1px;width:21.4px;color:#6e7781">10</div><div class="abs" style="left:315px;top:178.5px;width:1px;height:14.5px;background:#e4e7ea"></div><div class="abs" style="left:0px;top:193.0px;width:29px;height:14.5px;background:#f6f8fa"></div><div class="abs" style="left:29px;top:193.0px;width:286px;height:14.5px;background:#f6f8fa;overflow:hidden"></div><div class="abs" style="left:315px;top:193.0px;width:27px;height:14.5px;background:#ccffd8"></div><div class="abs" style="left:342px;top:193.0px;width:338px;height:14.5px;background:#e6ffec;overflow:hidden"><div class="code" style="left:6.6px;top:1.3px;color:#59636e;font-size:7.5px">+</div><div class="code" style="left:16.0px;top:1.3px"><span class="k">ALTER</span> <span class="k">TABLE</span> [dbo].[discounts] ADD <span class="k">CONSTRAINT</span> [PK_Discounts] <span class="k">PRIMARY</span> <span class="k">KEY</span></div></div><div class="num" style="left:315px;top:193.6px;width:21.4px;color:#3d444c">11</div><div class="abs" style="left:315px;top:193.0px;width:1px;height:14.5px;background:#e4e7ea"></div><div class="abs" style="left:0px;top:207.5px;width:29px;height:14.5px;background:#f6f8fa"></div><div class="abs" style="left:29px;top:207.5px;width:286px;height:14.5px;background:#f6f8fa;overflow:hidden"></div><div class="abs" style="left:315px;top:207.5px;width:27px;height:14.5px;background:#ccffd8"></div><div class="abs" style="left:342px;top:207.5px;width:338px;height:14.5px;background:#e6ffec;overflow:hidden"><div class="code" style="left:6.6px;top:1.3px;color:#59636e;font-size:7.5px">+</div><div class="code" style="left:16.0px;top:1.3px"><span class="k">GO</span></div></div><div class="num" style="left:315px;top:208.1px;width:21.4px;color:#3d444c">12</div><div class="abs" style="left:315px;top:207.5px;width:1px;height:14.5px;background:#e4e7ea"></div><div class="abs" style="left:29px;top:222.0px;width:286px;height:29.0px;background:#fff;overflow:hidden"><div class="abs" style="left:0;top:0;width:264.6px;height:100%;overflow:hidden"><div class="code" style="left:14.5px;top:1.3px"><span class="k">ALTER</span> <span class="k">TABLE</span> [dbo].[discounts] ADD <span class="k">CONSTRAINT</span> [FK__discounts__stor_id]</div><div class="code" style="left:14.5px;top:15.8px"><span class="k">REFERENCES</span> [dbo].[stores] ([stor_id])</div></div></div><div class="num" style="left:0px;top:222.6px;width:22px;color:#6e7781">10</div><div class="abs" style="left:342px;top:222.0px;width:338px;height:29.0px;background:#fff;overflow:hidden"><div class="code" style="left:16.0px;top:1.3px"><span class="k">ALTER</span> <span class="k">TABLE</span> [dbo].[discounts] ADD <span class="k">CONSTRAINT</span> [FK__discounts__stor_id]</div><div class="code" style="left:16.0px;top:15.8px"><span class="k">REFERENCES</span> [dbo].[stores] ([stor_id])</div></div><div class="num" style="left:315px;top:222.6px;width:21.4px;color:#6e7781">13</div><div class="abs" style="left:315px;top:222.0px;width:1px;height:29.0px;background:#e4e7ea"></div><div class="abs" style="left:29px;top:251.0px;width:286px;height:14.5px;background:#fff;overflow:hidden"><div class="abs" style="left:0;top:0;width:264.6px;height:100%;overflow:hidden"><div class="code" style="left:14.5px;top:1.3px"><span class="k">GO</span></div></div></div><div class="num" style="left:0px;top:251.6px;width:22px;color:#6e7781">11</div><div class="abs" style="left:342px;top:251.0px;width:338px;height:14.5px;background:#fff;overflow:hidden"><div class="code" style="left:16.0px;top:1.3px"><span class="k">GO</span></div></div><div class="num" style="left:315px;top:251.6px;width:21.4px;color:#6e7781">14</div><div class="abs" style="left:315px;top:251.0px;width:1px;height:14.5px;background:#e4e7ea"></div><div class="abs" style="left:0;top:0;width:680px;height:264.5px;border:1px solid #d0d7de;border-radius:5px"></div></div>
<div class="bx" style="top:554px;height:60px"><div class="abs" style="left:0;top:0;width:680px;height:27px;background:#f6f8fa;border-bottom:1px solid #d0d7de"></div><svg class="abs" style="left:15px;top:12.6px" width="8" height="6" viewBox="0 0 8 6"><path d="M0.8 1.2 L4 4.3 L7.2 1.2" fill="none" stroke="#59636e" stroke-width="1.2" stroke-linecap="round" stroke-linejoin="round"/></svg><svg class="abs" style="left:31px;top:8.1px" width="10" height="11" viewBox="0 0 10 11"><path d="M5 0.6 L7.3 3 H2.7 Z M5 10.4 L7.3 8 H2.7 Z" fill="#59636e"/><path d="M5 2.5 V3.8 M5 7.2 V8.5" stroke="#59636e" stroke-width="1.1"/><path d="M0.5 5.5 H9.5" stroke="#8c959f" stroke-width="0.9" stroke-dasharray="1.2 0.7"/></svg><div class="code" style="left:45.5px;top:7.35px;color:#3b4148">53</div><svg class="abs" style="left:60px;top:12.0px" width="32" height="6" viewBox="0 0 32 6"><rect x="0.00" y="0" width="5.4" height="5.4" fill="#2c9f4b"/><rect x="6.25" y="0" width="5.4" height="5.4" fill="#2c9f4b"/><rect x="12.50" y="0" width="5.4" height="5.4" fill="#cf222e"/><rect x="18.75" y="0" width="5.4" height="5.4" fill="#cf222e"/><rect x="25.00" y="0" width="5.4" height="5.4" fill="#e6e9ec"/></svg><div class="code" style="left:94.5px;top:7.35px;color:#3b4148">schema-model/Tables/dbo.employee.sql</div><svg class="abs" style="left:264px;top:7.300000000000001px" width="11" height="11" viewBox="0 0 11 11"><rect x="3.6" y="0.7" width="6.7" height="6.7" rx="1" fill="none" stroke="#59636e" stroke-width="1.2"/><path d="M2.2 3.5 H1.7 Q0.7 3.5 0.7 4.5 V9.3 Q0.7 10.3 1.7 10.3 H6.5 Q7.5 10.3 7.5 9.3 V8.8" fill="none" stroke="#59636e" stroke-width="1.2"/></svg><div class="abs" style="left:0;top:27px;width:29px;height:19px;background:#bbdfff"></div><div class="abs" style="left:29px;top:27px;width:651px;height:19px;background:#ddf4ff"></div><div class="abs" style="left:0;top:0;width:680px;height:60px;border:1px solid #d0d7de;border-radius:5px"></div></div></body></html>
